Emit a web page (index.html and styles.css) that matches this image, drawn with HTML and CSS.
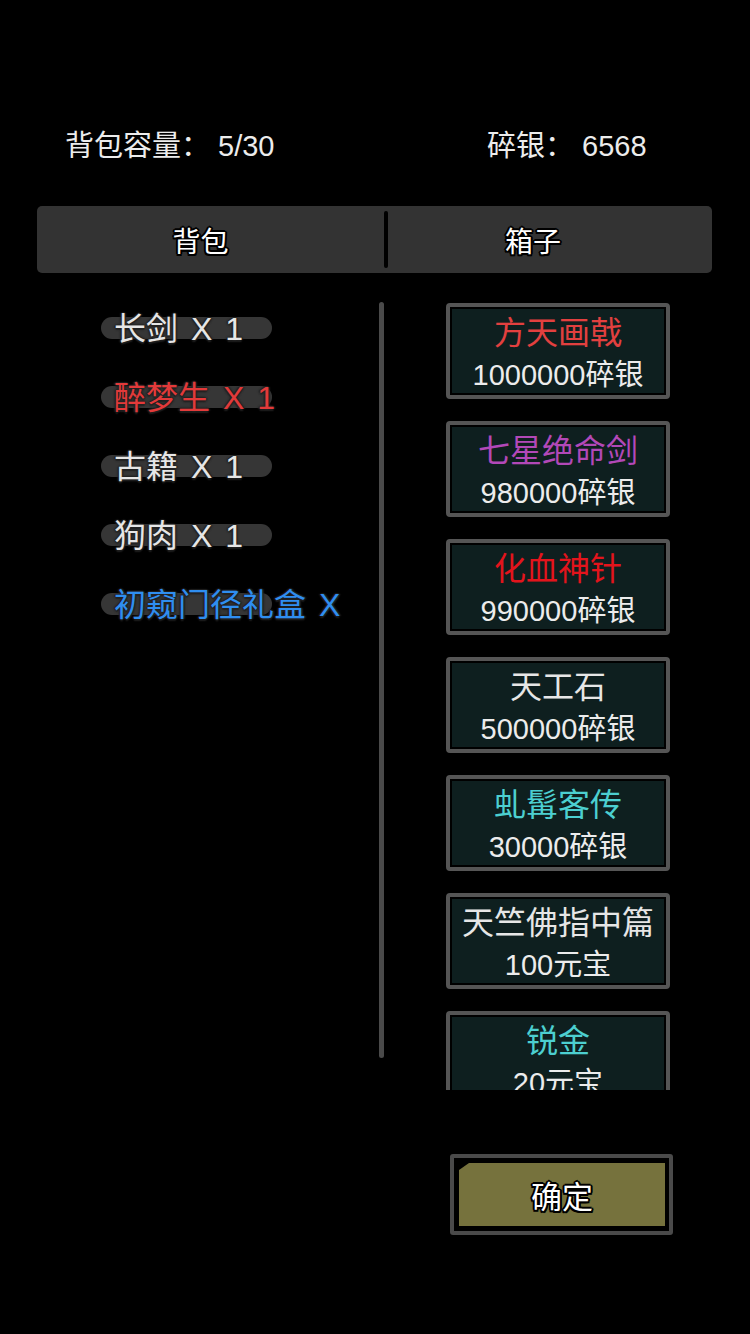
FILE: index.html
```html
<!DOCTYPE html>
<html lang="zh">
<head>
<meta charset="utf-8">
<link rel="stylesheet" href="styles.css">
</head>
<body>
<div class="page">
  <div class="header">
    <div class="stat stat-left">背包容量：&nbsp;5/30</div>
    <div class="stat stat-right">碎银：&nbsp;6568</div>
  </div>

  <div class="tabs">
    <div class="tab tab-left">背包</div>
    <div class="tab-divider"></div>
    <div class="tab tab-right">箱子</div>
  </div>

  <div class="main">
    <div class="bag-list">
      <div class="bag-item"><span class="bag-text c-white">长剑 X 1</span></div>
      <div class="bag-item"><span class="bag-text c-red">醉梦生 X 1</span></div>
      <div class="bag-item"><span class="bag-text c-white">古籍 X 1</span></div>
      <div class="bag-item"><span class="bag-text c-white">狗肉 X 1</span></div>
      <div class="bag-item"><span class="bag-text c-blue">初窥门径礼盒 X</span></div>
    </div>
    <div class="scrollbar"></div>
    <div class="box-view">
      <div class="card"><div class="card-inner"><div class="card-title t-red">方天画戟</div><div class="card-price">1000000碎银</div></div></div>
      <div class="card"><div class="card-inner"><div class="card-title t-purple">七星绝命剑</div><div class="card-price">980000碎银</div></div></div>
      <div class="card"><div class="card-inner"><div class="card-title t-crimson">化血神针</div><div class="card-price">990000碎银</div></div></div>
      <div class="card"><div class="card-inner"><div class="card-title t-white">天工石</div><div class="card-price">500000碎银</div></div></div>
      <div class="card"><div class="card-inner"><div class="card-title t-cyan">虬髯客传</div><div class="card-price">30000碎银</div></div></div>
      <div class="card"><div class="card-inner"><div class="card-title t-white">天竺佛指中篇</div><div class="card-price">100元宝</div></div></div>
      <div class="card"><div class="card-inner"><div class="card-title t-cyan">锐金</div><div class="card-price">20元宝</div></div></div>
    </div>
  </div>

  <div class="footer">
    <div class="confirm">
      <div class="confirm-inner">确定</div>
    </div>
  </div>
</div>
</body>
</html>
```

FILE: styles.css
```css
html, body {
  margin: 0;
  padding: 0;
  background: #000;
}

body {
  width: 750px;
  height: 1334px;
  overflow: hidden;
  font-family: "Liberation Sans", "Noto Sans CJK SC", sans-serif;
  color: #e8e8e8;
}

.page {
  display: flex;
  flex-direction: column;
}

.header {
  display: grid;
  grid-template-columns: 487px 1fr;
  margin-top: 116px;
  height: 60px;
  align-items: center;
}

.stat {
  font-size: 29px;
  line-height: 60px;
  color: #ececec;
  white-space: nowrap;
}

.stat-left {
  padding-left: 65px;
}

.tabs {
  margin-top: 30px;
  margin-left: 37px;
  width: 675px;
  height: 67px;
  background: #333333;
  border-radius: 5px;
  display: flex;
  align-items: center;
}

.tab {
  flex: none;
  box-sizing: border-box;
  text-align: center;
  font-size: 28px;
  color: #fff;
  line-height: 67px;
  padding-top: 5px;
  text-shadow:
    -2px 0 0 #000, 2px 0 0 #000, 0 -2px 0 #000, 0 2px 0 #000,
    -1.5px -1.5px 0 #000, 1.5px -1.5px 0 #000, -1.5px 1.5px 0 #000, 1.5px 1.5px 0 #000;
}

.tab-left {
  width: 347px;
  padding-right: 20px;
}

.tab-right {
  width: 324px;
  padding-right: 34px;
}

.tab-divider {
  flex: none;
  width: 4px;
  height: 57px;
  background: #000;
  border-radius: 2px;
}

.main {
  display: flex;
  height: 817px;
}

.bag-list {
  width: 379px;
  padding-top: 20px;
  display: flex;
  flex-direction: column;
}

.bag-item {
  position: relative;
  height: 69px;
  display: flex;
  align-items: center;
  padding-left: 114px;
}

.bag-item::before {
  content: "";
  position: absolute;
  left: 101px;
  top: 24px;
  width: 171px;
  height: 22px;
  border-radius: 11px;
  background: #363636;
}

.bag-text {
  position: relative;
  top: 1px;
  font-size: 32px;
  line-height: 40px;
  word-spacing: 4px;
  white-space: nowrap;
  text-shadow:
    -1.5px 0 1.5px #222, 1.5px 0 1.5px #222, 0 -1.5px 1.5px #222, 0 1.5px 1.5px #222;
}

.c-white { color: #e6e6e6; }
.c-red { color: #e23a3a; }
.c-blue { color: #2f8ef0; }

.scrollbar {
  width: 5px;
  height: 756px;
  margin-top: 29px;
  background: #4a4a4a;
  border-radius: 3px;
}

.box-view {
  margin-left: 62px;
  width: 230px;
  margin-top: 20px;
  height: 797px;
  overflow: hidden;
  padding-top: 10px;
  box-sizing: border-box;
  display: flex;
  flex-direction: column;
  gap: 22px;
}

.card {
  flex: none;
  width: 224px;
  height: 96px;
  box-sizing: border-box;
  border: 4px solid #555555;
  border-radius: 4px;
  background: #000;
  padding: 2px;
}

.card-inner {
  height: 100%;
  box-sizing: border-box;
  padding-top: 3px;
  background: #0e1f1f;
  display: flex;
  flex-direction: column;
  align-items: center;
}

.card-title {
  font-size: 32px;
  line-height: 42px;
  white-space: nowrap;
}

.card-price {
  font-size: 29px;
  line-height: 42px;
  color: #ececec;
  white-space: nowrap;
}

.t-red { color: #e2403f; }
.t-purple { color: #b248b8; }
.t-crimson { color: #e3141c; }
.t-white { color: #e6e6e6; }
.t-cyan { color: #4ccfd0; }

.footer {
  margin-top: 64px;
  padding-left: 450px;
}

.confirm {
  width: 223px;
  height: 81px;
  box-sizing: border-box;
  border: 4px solid #4a4a4a;
  border-radius: 3px;
  background: #000;
  padding: 5px 4px 5px 5px;
}

.confirm-inner {
  height: 100%;
  background: #76723d;
  clip-path: polygon(10px 0, 100% 0, 100% 100%, 0 100%, 0 7px);
  display: flex;
  align-items: center;
  justify-content: center;
  font-size: 31px;
  color: #fff;
  text-shadow:
    -2px 0 0 #000, 2px 0 0 #000, 0 -2px 0 #000, 0 2px 0 #000,
    -1.5px -1.5px 0 #000, 1.5px -1.5px 0 #000, -1.5px 1.5px 0 #000, 1.5px 1.5px 0 #000;
}
```
